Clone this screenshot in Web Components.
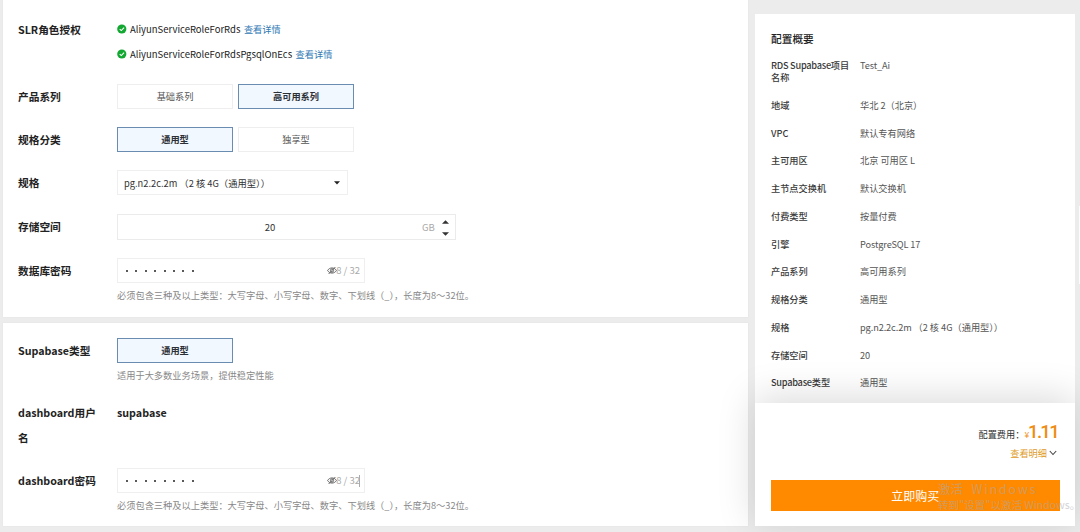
<!DOCTYPE html>
<html lang="zh-CN">
<head>
<meta charset="utf-8">
<title>RDS Supabase</title>
<style>
html,body{margin:0;height:100%;overflow:hidden;background:#ececec}
body{font-family:"Noto Sans CJK SC",sans-serif;font-size:9.2px;color:#333}
</style>
</head>
<body>
<buy-page></buy-page>
<script>
const define=(name,html,setup)=>customElements.define(name,class extends HTMLElement{
  connectedCallback(){
    if(this.shadowRoot)return;
    const t=document.createElement('template');
    t.innerHTML=html;
    this.attachShadow({mode:'open'}).append(t.content.cloneNode(true));
    if(setup)setup(this,this.shadowRoot);
  }
});

define('form-row',`<style>
:host{display:grid;grid-template-columns:82px 1fr;column-gap:17px;line-height:25px}
.l{font-size:10.7px;font-weight:700;color:#222;white-space:normal}
</style><div class="l"><slot name="label"></slot></div><div><slot></slot></div>`);

define('role-line',`<style>
:host{display:flex;align-items:center;height:25px;font-size:9.5px;color:#222;white-space:nowrap}
svg{width:10px;height:10px;margin-right:3px}
a{color:#3179b5;font-size:9.2px;margin-left:3.5px}
</style><svg viewBox="0 0 10 10"><circle cx="4.8" cy="5" r="4.6" fill="#13a831"/><path d="M2.7 5.1 4.3 6.6 7.1 3.7" fill="none" stroke="#fff" stroke-width="1.1"/></svg><slot></slot><a>查看详情</a>`);

define('choice-button',`<style>
:host{display:flex;align-items:center;justify-content:center;box-sizing:border-box;width:116px;height:25px;border:1px solid #eee;background:#fff;color:#555;font-size:9.2px}
:host([selected]){border-color:#6a8cb0;background:#f2f8ff;color:#2b2f36;font-weight:700}
</style><slot></slot>`);

define('choice-group',`<style>:host{display:flex;gap:5px}</style><slot></slot>`);

define('spec-select',`<style>
:host{display:flex;align-items:center;justify-content:space-between;box-sizing:border-box;width:231px;height:25px;border:1px solid #efefef;padding:0 7px 0 6px;font-size:9.3px;white-space:pre}
span{padding-top:1px}
svg{width:6px;height:4px}
</style><span><slot></slot></span><svg viewBox="0 0 6 4"><path d="M0 .3H6L3 3.5Z" fill="#222"/></svg>`);

define('number-field',`<style>
:host{display:grid;grid-template-columns:304px 14px 1fr;align-items:center;box-sizing:border-box;width:339px;height:26px;border:1px solid #ebebeb;font-size:9.5px}
.n{text-align:center}.u{color:#aaa}
.s{display:flex;flex-direction:column;gap:8px;align-items:center;padding-right:1px}
svg{width:7px;height:4px;display:block}
</style><span class="n"><slot></slot></span><span class="u">GB</span><span class="s"><svg viewBox="0 0 7 4"><path d="M0 3.7H7L3.5.3Z" fill="#333"/></svg><svg viewBox="0 0 7 4"><path d="M0 .3H7L3.5 3.7Z" fill="#333"/></svg></span>`);

define('password-field',`<style>
:host{display:flex;align-items:center;box-sizing:border-box;width:248px;height:25px;border:1px solid #efefef;padding:0 4px 0 8px;color:#aaa;font-size:9.5px}
.d{display:flex;flex:1;gap:7.4px}
i{width:2px;height:2px;border-radius:50%;background:#222}
svg{width:10px;height:9px;margin-right:-.5px}
.caret{display:none;width:1px;height:12px;background:#aaa;margin-left:-1px}
:host([focused]) .caret{display:block}
</style><span class="d"><i></i><i></i><i></i><i></i><i></i><i></i><i></i><i></i></span>
<svg viewBox="0 0 10 9"><g fill="none" stroke="#555" stroke-width=".9"><path d="M.6 4.5C2.5 1.1 7.5 1.1 9.4 4.5 7.5 7.9 2.5 7.9.6 4.5Z"/><circle cx="5" cy="4.5" r="1.6"/><path d="M1.6 8 8.4 1"/></g></svg><span>8 / 32</span><span class="caret"></span>`);

define('hint-text',`<style>:host{display:block;font-size:9.22px;line-height:14px;color:#888;white-space:nowrap}</style><slot></slot>`);

define('form-panel',`<style>:host{display:block;box-sizing:border-box;background:#fff;padding-left:15px;box-shadow:0 0 1px #ddd}</style><slot></slot>`);

define('summary-row',`<style>
:host{display:grid;grid-template-columns:80px 1fr;column-gap:9px;line-height:12px;margin-bottom:15.75px;font-size:9.2px}
.k{font-weight:500;color:#3a3a3a}.v{color:#555;white-space:pre}
</style><div class="k"><slot name="k"></slot></div><div class="v"><slot></slot></div>`);

define('config-summary',`<style>
:host{display:block;box-sizing:border-box;height:389px;padding:18px 15px 0 16px;overflow:hidden;background:#fff}
h2{font-size:10.7px;line-height:14px;margin:0 0 13px;font-weight:500;color:#222}
.lt{letter-spacing:-.25px}
.v{letter-spacing:-.1px}
</style><h2>配置概要</h2><div id="rows"></div>`,(h,r)=>{
  const rows=[['RDS Supabase项目名称','Test_Ai'],['地域','华北 2（北京）'],['VPC','默认专有网络'],['主可用区','北京 可用区 L'],['主节点交换机','默认交换机'],['付费类型','按量付费'],['引擎','PostgreSQL 17'],['产品系列','高可用系列'],['规格分类','通用型'],['规格','pg.n2.2c.2m （2 核 4G（通用型））'],['存储空间','20'],['Supabase类型','通用型']];
  const latin=(s,c)=>s.replace(/[A-Za-z][\w. ]{4,}/g,`<span class="${c}">$&</span>`);
  r.getElementById('rows').innerHTML=rows.map(([k,v])=>`<summary-row><span slot="k">${latin(k,'lt')}</span>${latin(v,'v')}</summary-row>`).join('');
});

define('order-footer',`<style>
:host{display:block;box-sizing:border-box;height:123px;padding:16px 15px 0 15.5px;background:#fff;position:relative;box-shadow:0 -5px 36px rgba(0,0,0,.15)}
.p{display:flex;justify-content:flex-end;align-items:baseline;height:26px;line-height:26px;font-size:9.2px}
.y{color:#f0901c;margin-left:0;font-size:8.5px}
.n{color:#ee8c14;font-family:Roboto,sans-serif;font-size:18.5px;font-weight:500;letter-spacing:-1.7px;margin:0 2px 0 -1px}
.d{display:flex;justify-content:flex-end;align-items:center;gap:2px;height:16px;color:#e09a28;font-size:9.2px;padding-right:3px}
svg{width:8px;height:6px}
button{display:block;box-sizing:border-box;width:100%;height:31px;margin:19px 0 0;padding:0;border:0;background:#ff8a00;color:#fff;font:12px/31px "Noto Sans CJK SC",sans-serif}
</style><div class="p"><span>配置费用：</span><span class="y">¥</span><span class="n">1.11</span></div>
<div class="d"><span>查看明细</span><svg viewBox="0 0 8 6"><path d="M.8 1 4 4.5 7.2 1" fill="none" stroke="#444" stroke-width="1.1"/></svg></div>
<button>立即购买</button>`);

define('activation-mark',`<style>
:host{position:absolute;left:938px;top:481px;color:#a9a9b0;opacity:.5;white-space:nowrap;pointer-events:none}
.a{font-size:12.5px;line-height:15px}.a span{letter-spacing:1.8px;margin-left:4px}.b{font-size:10.6px;line-height:18px}
</style><div class="a">激活<span> Windows</span></div><div class="b">转到"设置"以激活 Windows。</div>`);

define('scroll-thumb',`<style>:host{position:absolute;left:1079px;top:206px;width:1px;height:78px;background:#fff}</style>`);

define('buy-page',`<style>
:host{display:grid;grid-template-columns:745px 320px;column-gap:7px;width:1080px;height:532px;padding-left:3px;box-sizing:border-box;position:relative;overflow:hidden}
form-panel.one{height:317px;padding-top:16.5px}
form-panel.two{height:203px;margin-top:6px;padding-top:15px}
aside{margin-top:14px;height:512px}
b{font-size:10.7px;color:#222}
</style>
<main>
<form-panel class="one">
<form-row><span slot="label">SLR角色授权</span><role-line>AliyunServiceRoleForRds</role-line><role-line>AliyunServiceRoleForRdsPgsqlOnEcs</role-line></form-row>
<form-row style="margin-top:17.5px"><span slot="label">产品系列</span><choice-group><choice-button>基础系列</choice-button><choice-button selected>高可用系列</choice-button></choice-group></form-row>
<form-row style="margin-top:18px"><span slot="label">规格分类</span><choice-group><choice-button selected>通用型</choice-button><choice-button>独享型</choice-button></choice-group></form-row>
<form-row style="margin-top:18px"><span slot="label">规格</span><spec-select>pg.n2.2c.2m （2 核 4G（通用型））</spec-select></form-row>
<form-row style="margin-top:19px"><span slot="label">存储空间</span><number-field>20</number-field></form-row>
<form-row style="margin-top:18px"><span slot="label">数据库密码</span><password-field></password-field><hint-text style="margin-top:5px">必须包含三种及以上类型：大写字母、小写字母、数字、下划线（_），长度为8～32位。</hint-text></form-row>
</form-panel>
<form-panel class="two">
<form-row><span slot="label">Supabase类型</span><choice-button selected>通用型</choice-button><hint-text style="margin-top:5px">适用于大多数业务场景，提供稳定性能</hint-text></form-row>
<form-row style="margin-top:18px"><span slot="label">dashboard用户名</span><b>supabase</b></form-row>
<form-row style="margin-top:18px"><span slot="label">dashboard密码</span><password-field focused></password-field><hint-text style="margin-top:5px">必须包含三种及以上类型：大写字母、小写字母、数字、下划线（_），长度为8～32位。</hint-text></form-row>
</form-panel>
</main>
<aside><config-summary></config-summary><order-footer></order-footer></aside>
<activation-mark></activation-mark><scroll-thumb></scroll-thumb>`);
</script>
</body>
</html>
